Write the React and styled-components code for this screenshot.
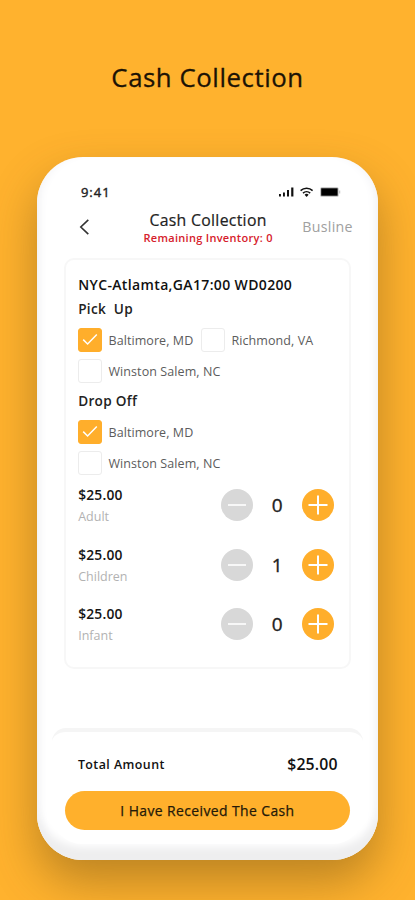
import React from "react";
import styled, { createGlobalStyle } from "styled-components";

const GlobalStyle = createGlobalStyle`
  * { box-sizing: border-box; }
  body { margin: 0; background: #ffb22e; font-family: "Open Sans", "Noto Sans", sans-serif; color: #111; }
`;

const Page = styled.main`
  width: 415px;
  height: 900px;
  overflow: hidden;
  background: #ffb22e;
`;

const PageTitle = styled.h1`
  margin: 0;
  height: 157px;
  line-height: 155px;
  text-align: center;
  font-size: 25.8px;
  font-weight: 500;
  letter-spacing: 0.55px;
  color: #1c1305;
  -webkit-text-stroke: 0.3px #1c1305;
`;

const Phone = styled.section`
  width: 341px;
  height: 702.5px;
  margin-left: 37.4px;
  padding: 16px 15px;
  border-radius: 46px;
  background: #fff;
  display: flex;
  flex-direction: column;
  box-shadow: 0 22px 46px rgba(95, 70, 20, 0.42), inset 0 -15px 9px -2px #eeeeef,
    inset 8px 0 10px -5px #f4f4f6, inset -8px 0 10px -5px #f4f4f6;
`;

const StatusBar = styled.div`
  height: 38px;
  padding: 0 22px 0 28.5px;
  display: flex;
  align-items: center;
  justify-content: space-between;
`;

const Clock = styled.span`
  font-size: 13px;
  font-weight: 500;
  letter-spacing: 1px;
  color: #222;
  -webkit-text-stroke: 0.4px #222;
`;

const StatusIcons = styled.svg`
  width: 62px;
  height: 12px;
`;

const NavBar = styled.header`
  height: 47px;
  padding: 0 10.6px 0 26px;
  display: grid;
  grid-template-columns: 53px 1fr 68px;
`;

const BackIcon = styled.svg`
  width: 12px;
  height: 18px;
  margin-top: 7px;
`;

const Heading = styled.div`
  display: flex;
  flex-direction: column;
  align-items: center;
  margin-top: -0.2px;
  white-space: nowrap;
`;

const ScreenTitle = styled.h2`
  margin: 0;
  font-size: 15.8px;
  font-weight: 500;
  line-height: 19px;
  letter-spacing: 0.3px;
  color: #222;
  -webkit-text-stroke: 0.2px #222;
`;

const Inventory = styled.p`
  margin: 0;
  font-size: 11px;
  font-weight: 600;
  line-height: 15px;
  letter-spacing: 0.3px;
  color: #d6202b;
`;

const Company = styled.span`
  text-align: right;
  font-size: 14.2px;
  line-height: 32px;
  letter-spacing: 0.3px;
  color: #a0a0a0;
`;

const Card = styled.article`
  width: 287px;
  height: 411px;
  margin-left: 12px;
  padding: 13px 14px 0 11.8px;
  border: 2px solid #f7f7f7;
  border-radius: 10px;
  flex: none;
`;

const Route = styled.h3`
  margin: 0;
  font-size: 14px;
  font-weight: 600;
  line-height: 24px;
  letter-spacing: 0.36px;
  white-space: nowrap;
  color: #111;
`;

const GroupTitle = styled.h4`
  margin: 0;
  font-size: 13.6px;
  font-weight: 600;
  line-height: ${(p) => p.$height}px;
  letter-spacing: 0.3px;
  white-space: pre;
  color: #222;
`;

const Options = styled.div`
  display: grid;
  grid-template-columns: 123px 1fr;
  grid-auto-rows: 31px;
  margin-top: ${(p) => p.$top}px;
`;

const Option = styled.label`
  display: flex;
  align-items: center;
  gap: 6.3px;
  grid-column: ${(p) => (p.$wide ? "1 / -1" : "auto")};
  font-size: 12.5px;
  letter-spacing: 0.08px;
  white-space: nowrap;
  color: #5c5c5c;
`;

const OptionName = styled.span`
  padding-top: 2px;
`;

const Box = styled.span`
  width: 24px;
  height: 24px;
  flex: none;
  display: grid;
  place-items: center;
  border-radius: 3px;
  border: 1px solid ${(p) => (p.$checked ? "#ffae2b" : "#ececec")};
  background: ${(p) => (p.$checked ? "#ffae2b" : "#fff")};
`;

const Fares = styled.div`
  display: flex;
  flex-direction: column;
  gap: 17.7px;
  margin-top: 6px;
`;

const Fare = styled.div`
  height: 42px;
  display: grid;
  grid-template-columns: 143px 32px 48px 33px;
  align-items: center;
`;

const FareText = styled.div`
  height: 42px;
`;

const Price = styled.div`
  font-size: 13.8px;
  font-weight: 600;
  line-height: 22px;
  letter-spacing: 0.2px;
  color: #151515;
`;

const Kind = styled.div`
  font-size: 12.5px;
  line-height: 22px;
  color: #b2b2b2;
`;

const Round = styled.button`
  width: 32px;
  height: 32px;
  padding: 0;
  border: 0;
  border-radius: 50%;
  display: grid;
  place-items: center;
  justify-self: end;
  background: ${(p) => (p.$active ? "#ffae2b" : "#d8d8d8")};
`;

const Count = styled.output`
  text-align: center;
  font-size: 19px;
  font-weight: 500;
  color: #222;
  -webkit-text-stroke: 0.35px #222;
`;

const Footer = styled.footer`
  width: 311px;
  height: 116px;
  margin-top: auto;
  padding: 0 13px 0 12.8px;
  border-top: 4px solid #f5f5f5;
  border-radius: 14px 14px 30px 30px;
  background: #fff;
`;

const TotalRow = styled.div`
  height: 59px;
  padding: 6px 12.8px 0 12.7px;
  display: flex;
  align-items: center;
  justify-content: space-between;
`;

const TotalLabel = styled.span`
  font-size: 12.4px;
  font-weight: 600;
  letter-spacing: 0.45px;
`;

const TotalValue = styled.span`
  font-size: 15.8px;
  font-weight: 600;
  letter-spacing: 0.15px;
`;

const Confirm = styled.button`
  width: 284.5px;
  height: 39px;
  padding: 0;
  border: 0;
  border-radius: 20px;
  background: #ffb02c;
  font: 500 13.9px "Open Sans", "Noto Sans", sans-serif;
  letter-spacing: 0.42px;
  color: #241908;
  -webkit-text-stroke: 0.25px #241908;
`;

const Check = () => (
  <svg width="16" height="13" viewBox="0 0 16 13" fill="none" stroke="#fff" strokeWidth="1.5">
    <path d="M1.2 6.6 5.6 11 14.8 1.6" />
  </svg>
);

const Sign = ({ plus }) => (
  <svg width="20" height="20" viewBox="0 0 20 20" stroke="#fff" strokeWidth="2" strokeOpacity={plus ? 1 : 0.8}>
    <path d={plus ? "M0.5 10H19.5M10 0.5V19.5" : "M1 10H19"} />
  </svg>
);

const Stop = ({ name, checked, wide }) => (
  <Option $wide={wide}>
    <Box $checked={checked}>{checked && <Check />}</Box>
    <OptionName>{name}</OptionName>
  </Option>
);

const fares = [
  { kind: "Adult", count: 0 },
  { kind: "Children", count: 1 },
  { kind: "Infant", count: 0 },
];

export default function App() {
  return (
    <Page>
      <GlobalStyle />
      <PageTitle>Cash Collection</PageTitle>
      <Phone>
        <StatusBar>
          <Clock>9:41</Clock>
          <StatusIcons viewBox="0 0 62 12" fill="#111">
            <path d="M0 8h1.9v2.5H0zM4 6.5h1.9v4H4zM8 4h2v6.5H8zM12.2 1.5h2.2v9h-2.2z" />
            <g fill="none" stroke="#111" strokeWidth="1.5">
              <path d="M21.6 4.6a8.6 8.6 0 0 1 12 0M24 7.1a5.2 5.2 0 0 1 7.2 0" />
            </g>
            <path d="M25.6 8.7a3 3 0 0 1 4 0l-2 2.3z" />
            <rect x="41.2" y="1.3" width="18.4" height="9.4" rx="1.5" fill="#bbb" />
            <rect x="42.2" y="2.3" width="16.4" height="7.4" fill="#000" />
            <path d="M60.2 4.4h1v3h-1z" fill="#bbb" />
          </StatusIcons>
        </StatusBar>
        <NavBar>
          <BackIcon viewBox="0 0 12 18" fill="none" stroke="#333" strokeWidth="1.6">
            <path d="M10.3 1.8 2.8 9l7.5 7.2" />
          </BackIcon>
          <Heading>
            <ScreenTitle>Cash Collection</ScreenTitle>
            <Inventory>Remaining Inventory: 0</Inventory>
          </Heading>
          <Company>Busline</Company>
        </NavBar>
        <Card>
          <Route>NYC-Atlamta,GA17:00 WD0200</Route>
          <GroupTitle $height={23}>Pick{"  "}Up</GroupTitle>
          <Options $top={4}>
            <Stop name="Baltimore, MD" checked />
            <Stop name="Richmond, VA" />
            <Stop name="Winston Salem, NC" wide />
          </Options>
          <GroupTitle $height={30}>Drop Off</GroupTitle>
          <Options $top={0}>
            <Stop name="Baltimore, MD" checked wide />
            <Stop name="Winston Salem, NC" wide />
          </Options>
          <Fares>
            {fares.map(({ kind, count }) => (
              <Fare key={kind}>
                <FareText>
                  <Price>$25.00</Price>
                  <Kind>{kind}</Kind>
                </FareText>
                <Round aria-label={`Remove ${kind}`}>
                  <Sign />
                </Round>
                <Count>{count}</Count>
                <Round $active aria-label={`Add ${kind}`}>
                  <Sign plus />
                </Round>
              </Fare>
            ))}
          </Fares>
        </Card>
        <Footer>
          <TotalRow>
            <TotalLabel>Total Amount</TotalLabel>
            <TotalValue>$25.00</TotalValue>
          </TotalRow>
          <Confirm>I Have Received The Cash</Confirm>
        </Footer>
      </Phone>
    </Page>
  );
}
